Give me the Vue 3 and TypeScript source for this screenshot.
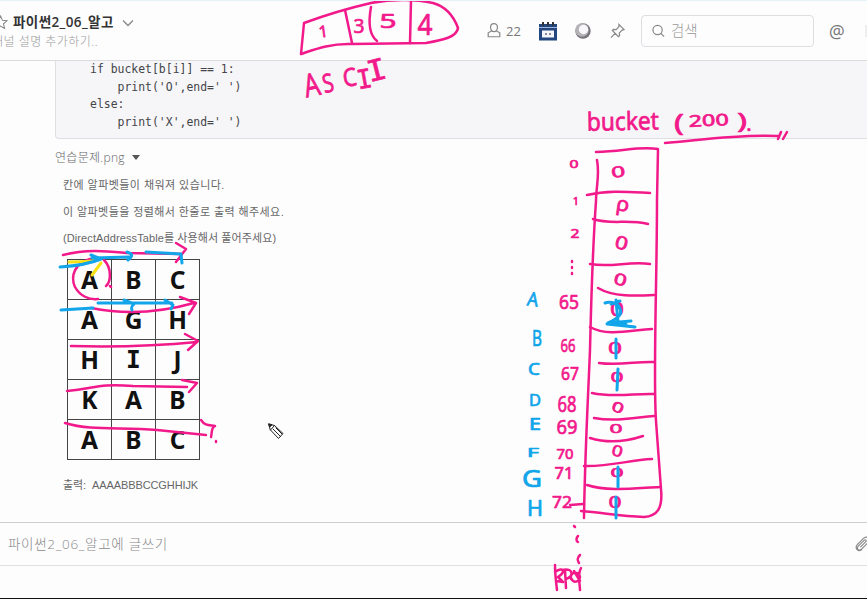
<script setup lang="ts">
interface Note {
  t: string
  x: number
  y: number
  s: number
  r?: number
  w?: number
}

const code = ["if bucket[b[i]] == 1:", "    print('O',end=' ')", 'else:', "    print('X',end=' ')"].join('\n')

const rows: string[][] = [
  ['A', 'B', 'C'],
  ['A', 'G', 'H'],
  ['H', 'I', 'J'],
  ['K', 'A', 'B'],
  ['A', 'B', 'C'],
]

/* x is the middle of the word, y its baseline, w its drawn width */
const pinkNotes: Note[] = [
  { t: '1', x: 324, y: 37, s: 16, r: -8 },
  { t: '3', x: 359, y: 33, s: 20, w: 11 },
  { t: '5', x: 388, y: 28, s: 19, w: 17 },
  { t: '4', x: 425, y: 35, s: 29, w: 15 },
  { t: 'A', x: 314, y: 96, s: 32, r: -12, w: 16 },
  { t: 'S', x: 330, y: 92, s: 26, r: -12, w: 11 },
  { t: 'C', x: 351, y: 86, s: 25, r: -8, w: 14 },
  { t: 'bucket', x: 623, y: 130, s: 25, r: -1, w: 72 },
  { t: '(', x: 679, y: 131, s: 23, w: 10 },
  { t: '200', x: 709, y: 126, s: 16, r: -3, w: 40 },
  { t: ')', x: 742, y: 129, s: 22, w: 10 },
  { t: '.', x: 749, y: 131, s: 20 },
  { t: '0', x: 574, y: 168, s: 11, w: 9 },
  { t: '1', x: 576, y: 205, s: 11 },
  { t: '2', x: 575, y: 238, s: 12, w: 9 },
  { t: '65', x: 569, y: 309, s: 19, w: 20 },
  { t: '66', x: 568, y: 352, s: 18, w: 15 },
  { t: '67', x: 570, y: 380, s: 18, w: 18 },
  { t: '68', x: 567, y: 412, s: 21, w: 19 },
  { t: '69', x: 567, y: 434, s: 20, w: 21 },
  { t: '70', x: 565, y: 459, s: 14, w: 17 },
  { t: '71', x: 564, y: 479, s: 16, w: 19 },
  { t: '72', x: 562, y: 508, s: 17, w: 20 },
  { t: '0', x: 619, y: 177, s: 15, r: -8, w: 14 },
  { t: 'ρ', x: 622, y: 211, s: 20, r: 8, w: 13 },
  { t: '0', x: 620, y: 249, s: 18, r: 14, w: 13 },
  { t: '0', x: 619, y: 285, s: 16, r: 14, w: 13 },
  { t: '0', x: 617, y: 316, s: 20, w: 14 },
  { t: '0', x: 615, y: 354, s: 17, w: 14 },
  { t: '0', x: 617, y: 382, s: 15, w: 13 },
  { t: '0', x: 616, y: 412, s: 14, r: 22, w: 12 },
  { t: '0', x: 616, y: 433, s: 13, w: 13 },
  { t: '0', x: 616, y: 456, s: 15, r: 14, w: 11 },
  { t: '0', x: 617, y: 477, s: 12, w: 13 },
  { t: '0', x: 615, y: 508, s: 16, w: 13 },
]
const serifNotes: Note[] = [
  { t: 'I', x: 366, y: 88, s: 26, r: -10, w: 15 },
  { t: 'I', x: 379, y: 80, s: 29, r: -14, w: 19 },
]
const blueNotes: Note[] = [
  { t: 'A', x: 532, y: 306, s: 19, r: 8, w: 11 },
  { t: 'B', x: 537, y: 346, s: 21, w: 10 },
  { t: 'C', x: 534, y: 375, s: 16, w: 12 },
  { t: 'D', x: 535, y: 406, s: 16, w: 12 },
  { t: 'E', x: 535, y: 430, s: 16, w: 12 },
  { t: 'F', x: 533, y: 457, s: 13, w: 12 },
  { t: 'G', x: 532, y: 487, s: 23, w: 20 },
  { t: 'H', x: 535, y: 516, s: 21, w: 16 },
]

const turn = (n: Note) => `rotate(${n.r ?? 0} ${n.x} ${n.y})`

const pinkLines: string[] = [
  'M304 23 C323 16 345 9 371 3 C392-1 416-1 433 3 C447 7 454 17 458 28 C457 37 443 40 426 43 L352 44 C330 43 313 50 301 54 Z',
  'M345 10 L352 43', 'M371 7 C369 18 368 34 377 41', 'M411 1 L410 43',
  'M665 143 C695 141 734 134 778 136', 'M781 132 L778 139 M787 132 L783 139',
  'M596 152 C625 151 640 146 658 149 L657 200 C657 280 653 375 656 421 L661 489 C663 509 657 516 644 517 C620 516 605 513 581 511',
  'M597 160 C600 175 596 187 596 201 C592 258 591 310 590 350 C588 400 585 450 584 518',
  'M587 195 C609 190 629 192 650 193', 'M593 219 C609 225 629 219 648 224',
  'M590 264 C612 268 628 261 650 264', 'M598 288 C613 297 636 296 654 295',
  'M590 327 C608 337 631 330 652 329', 'M599 363 C619 366 638 361 654 362',
  'M592 393 C614 398 636 393 654 394', 'M594 418 C617 422 637 417 654 416',
  'M590 438 C609 444 628 441 643 436', 'M584 466 C608 467 630 460 652 459',
  'M587 485 C608 492 637 488 660 487',
  'M570 505 L583 504',
  'M572 261 L572 262 M572 267 L572 268 M572 273 L572 274',
  'M574 526 L575 527 M578 536 C576 538 576 541 578 542 M580 555 C577 558 577 560 579 563',
  'M555 565 C555 573 556 582 557 590 M555 572 C564 566 566 572 558 577 L563 582 L556 581 M565 570 L566 588 M562 570 C574 567 574 577 566 579 M571 579 C569 572 579 570 580 577 C579 583 573 583 571 578 M581 568 C577 575 580 583 580 590 M574 571 L580 581',
  'M63 255 C87 249 105 251 127 253 L181 254 M176 243 L186 249 L176 262',
  'M90 259 C75 263 70 276 75 287 C80 296 89 300 98 299 M104 260 C112 268 111 282 106 286 M110 286 L111 287',
  'M91 308 C121 314 155 314 194 303 M180 297 L196 303 L189 314',
  'M71 346 C109 347 156 346 197 342 M185 334 L198 341 L188 350',
  'M67 391 C95 389 96 383 133 386 L187 387 M182 380 L197 383 L189 392',
  'M65 423 C91 431 119 427 157 430 L206 435 M201 420 C205 426 209 425 215 426 C211 427 212 434 211 437 M216 441 L216 442',
]
const blueLines: string[] = [
  'M605 303 C610 301 614 303 617 304 M616 300 L618 322 M611 304 L620 301 M618 305 C623 312 622 317 608 323 L631 321 M611 324 L635 327 L607 324 L626 323',
  'M616 339 L616 358', 'M618 369 L617 390', 'M618 467 L618 487', 'M616 497 L616 518',
  'M60 267 C76 266 89 264 101 259 L91 255 M92 258 L130 257 M127 252 C134 254 132 257 128 260',
  'M146 252 L181 254 L182 263',
  'M61 310 L93 308', 'M98 303 L172 303 M124 300 L134 304 C131 307 131 308 132 310 M165 300 L173 305 L171 309',
]
</script>

<template>
  <div class="screen">
    <header class="top">
      <div class="channel">
        <div class="title-row">
          <svg class="star" viewBox="0 0 14 14"><path d="M7 1l1.8 4 4.2.4-3.2 2.8 1 4.3L7 10.3l-3.8 2.2 1-4.3L1 5.4 5.2 5z" /></svg>
          <h1>파이썬2_06_알고</h1>
          <svg class="chevron" viewBox="0 0 12 8"><path d="M1 1.5l5 5 5-5" /></svg>
        </div>
        <p class="desc">채널 설명 추가하기..</p>
      </div>
      <div class="tools">
        <svg class="person" viewBox="0 0 15 17"><path d="M7.5 1.2c2.3 0 3.7 1.6 3.7 3.9s-1.4 4.6-3.7 4.6S3.8 7.4 3.8 5.1 5.2 1.2 7.5 1.2zM4.8 9L1.3 11v4.2h12.4V11L10.200 9" /></svg>
        <span class="count">22</span>
        <svg class="calendar" viewBox="0 0 20 20">
          <path class="navy" d="M1 3h18v16.500H1z" />
          <path class="paper" d="M4 9.500h12v7H4z" />
          <path class="sky" d="M1 6.500h18" />
          <path class="rings" d="M5 1v3.500M10 1v3.500M15 1v3.500" />
          <path class="dots" d="M7 13h2M11 13h2" />
        </svg>
        <svg class="moon" viewBox="0 0 16 16"><circle class="dark" cx="8" cy="8" r="7.7" /><circle class="mid" cx="7" cy="7" r="6.7" /><circle class="light" cx="8.500" cy="6.500" r="4.700" /></svg>
        <svg class="pin" viewBox="0 0 16 16"><path d="M9.500 1L15 6.500l-2 .5-3 3 .2 3-1.200 1L2.500 7.500l1-1.200 3 .2 3-3zM5.700 10.300L1 15" /></svg>
        <div class="search">
          <svg viewBox="0 0 14 14"><circle cx="6" cy="6" r="5" /><path d="M9.700 9.700L13 13" /></svg>
          <span>검색</span>
        </div>
        <span class="at">@</span>
        <i class="edge"></i>
      </div>
    </header>

    <main class="feed">
      <pre class="code">{{ code }}</pre>
      <div class="file"><span>연습문제.png</span><i class="caret"></i></div>
      <section class="problem">
        <p class="l1">칸에 알파벳들이 채워져 있습니다.</p>
        <p class="l2">이 알파벳들을 정렬해서 한줄로 출력 해주세요.</p>
        <p class="l3">(DirectAddressTable를 사용해서 풀어주세요)</p>
        <div class="grid">
          <template v-for="(row, i) in rows" :key="i">
            <div v-for="(c, j) in row" :key="j" class="cell" :class="{ slab: c === 'I' }">{{ c }}</div>
          </template>
        </div>
        <p class="answer"><span>출력:</span><span>AAAABBBCCGHHIJK</span></p>
      </section>
    </main>

    <footer class="bottom">
      <div class="composer">
        <span>파이썬2_06_알고에 글쓰기</span>
        <svg viewBox="0 0 18 18"><path d="M6 12l6-6c1.500-1.500-.3-3.200-1.800-1.700l-6.500 6.500c-2.800 2.800.8 6.300 3.600 3.500l7.200-7.200c4-4-1.300-8.700-5-5L2.800 8.800C-1 13 3.800 18.500 8 14.500" /></svg>
      </div>
      <div class="strip"></div>
    </footer>

    <svg class="ink" viewBox="0 0 867 599">
      <g class="pink">
        <path v-for="(d, i) in pinkLines" :key="i" :d="d" />
        <text v-for="(n, i) in pinkNotes" :key="'t' + i" :x="n.x" :y="n.y" :font-size="n.s" :textLength="n.w" lengthAdjust="spacingAndGlyphs" :transform="turn(n)">{{ n.t }}</text>
        <text v-for="(n, i) in serifNotes" :key="'s' + i" class="serif" :x="n.x" :y="n.y" :font-size="n.s" :textLength="n.w" lengthAdjust="spacingAndGlyphs" :transform="turn(n)">{{ n.t }}</text>
      </g>
      <path class="yellow" d="M69 262 C80 261 90 263 100 259 M101 263 L92 275" />
      <g class="blue">
        <path v-for="(d, i) in blueLines" :key="i" :d="d" />
        <text v-for="(n, i) in blueNotes" :key="'t' + i" :x="n.x" :y="n.y" :font-size="n.s" :textLength="n.w" lengthAdjust="spacingAndGlyphs" :transform="turn(n)">{{ n.t }}</text>
      </g>
      <g class="pencil" transform="translate(268 423)">
        <path d="M1 1L6.500 2.500 15 10.500 10.500 15.500 2.500 7zM2.500 7L6.500 2.500M5 6l7.500 7.500M8 5l6 6" />
        <path class="tip" d="M1 1l3 .8-2 2z" />
      </g>
    </svg>
  </div>
</template>

<style>
body {
  margin: 0;
  overflow: hidden;
}
</style>

<style scoped>
.screen {
  position: relative;
  box-sizing: border-box;
  width: 867px;
  height: 599px;
  display: flex;
  flex-direction: column;
  overflow: hidden;
  background: #fdfdfe;
  border-top: 1px solid #e4f3fa;
  border-bottom: 1px solid #111;
  font-family: 'Open Sans', 'Noto Sans CJK KR', sans-serif;
  color: #333;
}
svg {
  fill: none;
  stroke: #888;
  stroke-width: 1.300;
  flex: none;
}
p,
h1,
pre {
  margin: 0;
}
.top {
  box-sizing: border-box;
  height: 60px;
  flex: none;
  display: flex;
  justify-content: space-between;
  border-bottom: 1px solid #dcdce0;
}
.channel {
  margin-left: -7px;
  padding-top: 12px;
}
.title-row {
  display: flex;
  align-items: center;
  height: 19px;
}
.star {
  width: 15px;
  height: 15px;
  stroke-width: 1;
}
h1 {
  margin-left: 5px;
  font-size: 13.500px;
  line-height: 19px;
  font-weight: 600;
  letter-spacing: 0.400px;
  white-space: nowrap;
}
.chevron {
  width: 12px;
  height: 8px;
  margin-left: 8px;
}
.desc {
  margin-left: -1px;
  font-size: 12px;
  line-height: 20px;
  color: #999;
  font-weight: 300;
  white-space: nowrap;
  letter-spacing: 0.480px;
}
.tools {
  display: flex;
  align-items: center;
  width: 380px;
  flex: none;
}
.person {
  width: 14px;
  height: 17px;
}
.count {
  width: 16px;
  margin-left: 5px;
  font-size: 13px;
  color: #777;
}
.calendar {
  width: 20px;
  height: 20px;
  margin-left: 16px;
}
.navy {
  fill: #24477f;
  stroke: none;
}
.paper {
  fill: #f4f6fa;
  stroke: none;
}
.sky {
  stroke: #9fb6d6;
  stroke-width: 1;
}
.rings {
  stroke: #333;
  stroke-width: 2;
}
.dots {
  stroke: #667;
  stroke-width: 1.500;
}
.moon {
  width: 16px;
  height: 16px;
  margin-left: 17px;
}
.moon circle {
  stroke: none;
}
.dark {
  fill: #77737a;
}
.mid {
  fill: #b5b2b7;
}
.light {
  fill: #f7f6f8;
}
.pin {
  width: 15px;
  height: 16px;
  margin-left: 19px;
}
.search {
  box-sizing: border-box;
  width: 174px;
  height: 32px;
  margin-left: 16px;
  padding-left: 10px;
  display: flex;
  align-items: center;
  gap: 6px;
  border: 1px solid #dedee2;
  border-radius: 4px;
  color: #999;
  font-size: 14.500px;
  font-weight: 300;
}
.search svg {
  width: 13px;
  height: 14px;
}
.search span {
  padding-bottom: 2px;
}
.at {
  margin-left: 15px;
  width: 16px;
  color: #777;
  font: 17.500px/20px 'Open Sans', sans-serif;
}
.edge {
  width: 2px;
  height: 12px;
  margin-left: 20px;
  background: #eee;
}
.feed {
  flex: 1;
  min-height: 0;
}
.code {
  box-sizing: border-box;
  margin-left: 55px;
  margin-right: -5px;
  height: 78px;
  padding: 0 0 0 34px;
  border: 1px solid #dfdfe3;
  border-top: 0;
  border-radius: 0 0 4px 4px;
  background: #f6f6f8;
  font: 11.450px/17.600px 'DejaVu Sans Mono', monospace;
  color: #444448;
}
.file {
  display: flex;
  align-items: center;
  height: 18px;
  padding: 9px 0 0 55px;
  gap: 7px;
  color: #666;
  font-size: 12px;
  font-weight: 300;
  letter-spacing: 0.300px;
}
.caret {
  border: 4px solid transparent;
  border-top: 5px solid #555;
  border-bottom: 0;
}
.problem {
  padding: 9px 0 0 63px;
  font-family: 'Liberation Sans', 'Noto Sans CJK KR', sans-serif;
  color: #666;
  font-size: 11px;
}
.problem p {
  line-height: 20px;
  white-space: nowrap;
}
.problem .l1 {
  letter-spacing: 0.440px;
}
.problem .l2,
.problem .l3 {
  margin-top: 6.500px;
}
.problem .l2 {
  letter-spacing: 0.420px;
}
.problem .l3 {
  letter-spacing: 0.100px;
}
.grid {
  box-sizing: border-box;
  display: grid;
  grid-template-columns: repeat(3, 44px);
  grid-auto-rows: 40px;
  width: 133px;
  margin: 11px 0 0 4px;
  border-top: 1px solid #444;
  border-left: 1px solid #444;
}
.cell {
  box-sizing: border-box;
  display: flex;
  align-items: center;
  justify-content: center;
  border-right: 1px solid #444;
  border-bottom: 1px solid #444;
  color: #111;
  font: bold 24.500px/40px 'Noto Sans', sans-serif;
}
.slab {
  font-family: 'DejaVu Sans Mono', monospace;
}
.problem .answer {
  display: flex;
  gap: 6px;
  margin-top: 15px;
  letter-spacing: -0.100px;
}
.bottom {
  flex: none;
  height: 76px;
}
.composer {
  box-sizing: border-box;
  height: 44px;
  display: flex;
  align-items: center;
  justify-content: space-between;
  padding-left: 8px;
  border-top: 1px solid #cfcfd3;
  border-bottom: 1px solid #e1e1e5;
  color: #888;
  font-size: 13.500px;
  font-weight: 300;
  letter-spacing: 0.700px;
}
.composer span {
  padding-bottom: 3px;
}
.composer svg {
  width: 16px;
  height: 17px;
  margin-right: -4px;
}
.ink {
  position: absolute;
  left: 0;
  top: -1px;
  width: 867px;
  height: 599px;
  stroke-linecap: round;
  stroke-linejoin: round;
  stroke-width: 2.500;
}
.ink text {
  text-anchor: middle;
  font-family: 'Noto Sans', sans-serif;
  font-weight: 400;
  stroke-width: 0.700;
}
.ink text.serif {
  font-family: 'DejaVu Sans Mono', monospace;
}
.pink {
  stroke: #f2198b;
}
.pink text {
  fill: #f2198b;
}
.blue {
  stroke: #12a5ea;
}
.blue path {
  stroke-width: 3;
}
.blue text {
  fill: #12a5ea;
}
.yellow {
  stroke: #f8e112;
  stroke-width: 3;
}
.pencil {
  stroke: #222;
  stroke-width: 1;
  fill: #fff;
}
.tip {
  fill: #222;
}
</style>
